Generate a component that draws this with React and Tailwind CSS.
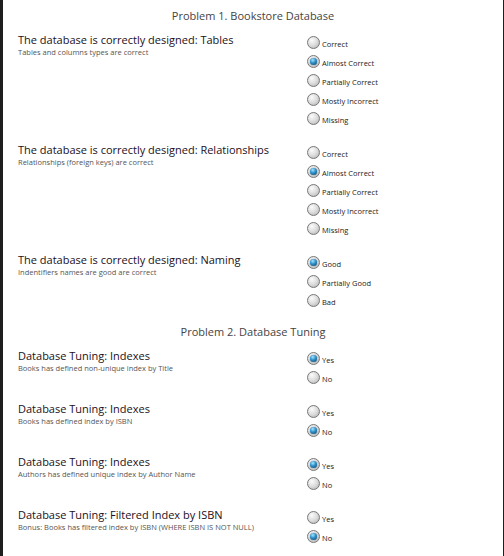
import React from "react";

const sections = [
  {
    title: "Problem 1. Bookstore Database",
    questions: [
      {
        title: "The database is correctly designed: Tables",
        hint: "Tables and columns types are correct",
        options: ["Correct", "Almost Correct", "Partially Correct", "Mostly Incorrect", "Missing"],
        selected: 1,
      },
      {
        title: "The database is correctly designed: Relationships",
        hint: "Relationships (foreign keys) are correct",
        options: ["Correct", "Almost Correct", "Partially Correct", "Mostly Incorrect", "Missing"],
        selected: 1,
      },
      {
        title: "The database is correctly designed: Naming",
        hint: "Indentifiers names are good are correct",
        options: ["Good", "Partially Good", "Bad"],
        selected: 0,
      },
    ],
  },
  {
    title: "Problem 2. Database Tuning",
    questions: [
      {
        title: "Database Tuning: Indexes",
        hint: "Books has defined non-unique index by Title",
        options: ["Yes", "No"],
        selected: 0,
      },
      {
        title: "Database Tuning: Indexes",
        hint: "Books has defined index by ISBN",
        options: ["Yes", "No"],
        selected: 1,
      },
      {
        title: "Database Tuning: Indexes",
        hint: "Authors has defined unique index by Author Name",
        options: ["Yes", "No"],
        selected: 0,
      },
      {
        title: "Database Tuning: Filtered Index by ISBN",
        hint: "Bonus: Books has filtered index by ISBN (WHERE ISBN IS NOT NULL)",
        options: ["Yes", "No"],
        selected: 1,
      },
    ],
  },
];

const Radio = ({ checked }) => (
  <span className="w-[13px] h-[13px] shrink-0 rounded-full border border-[#777] bg-[radial-gradient(circle_at_35%_30%,#fbfbfb,#dcdcdc_50%,#aeaeae)] flex items-center justify-center">
    {checked && (
      <span className="w-[7px] h-[7px] rounded-full bg-[radial-gradient(circle_at_40%_30%,#a6e4ff,#2a8fc8_45%,#0b3f66)] shadow-[0_0_1px_#0b3f66]" />
    )}
  </span>
);

const Question = ({ q }) => (
  <div className="flex">
    <div className="w-[289px] shrink-0">
      <p className="text-[11px] leading-[14px] text-[#221022]">{q.title}</p>
      <p className="text-[7.5px] leading-[10px] text-[#555]">{q.hint}</p>
    </div>
    <div className="flex flex-col">
      {q.options.map((opt, i) => (
        <label key={opt} className="h-[19px] flex items-center gap-[2px]">
          <Radio checked={i === q.selected} />
          <span className="text-[7.5px] leading-[10px] mt-[3px] text-[#222]">{opt}</span>
        </label>
      ))}
    </div>
  </div>
);

export default function App() {
  return (
    <div className="w-[504px] h-[556px] overflow-hidden bg-white border-l-[3px] border-r border-[#1e1e1e] font-['Open_Sans',sans-serif]">
      {sections.map((s, si) => (
        <div key={s.title} className={si === 0 ? "pt-[6px]" : "pt-[12px]"}>
          <h2 className="h-[20px] leading-[20px] text-center text-[11px] text-[#444] mb-[7px]">
            {s.title}
          </h2>
          <div className="pl-[15px] flex flex-col gap-[15px]">
            {s.questions.map((q, qi) => (
              <Question key={qi} q={q} />
            ))}
          </div>
        </div>
      ))}
    </div>
  );
}
